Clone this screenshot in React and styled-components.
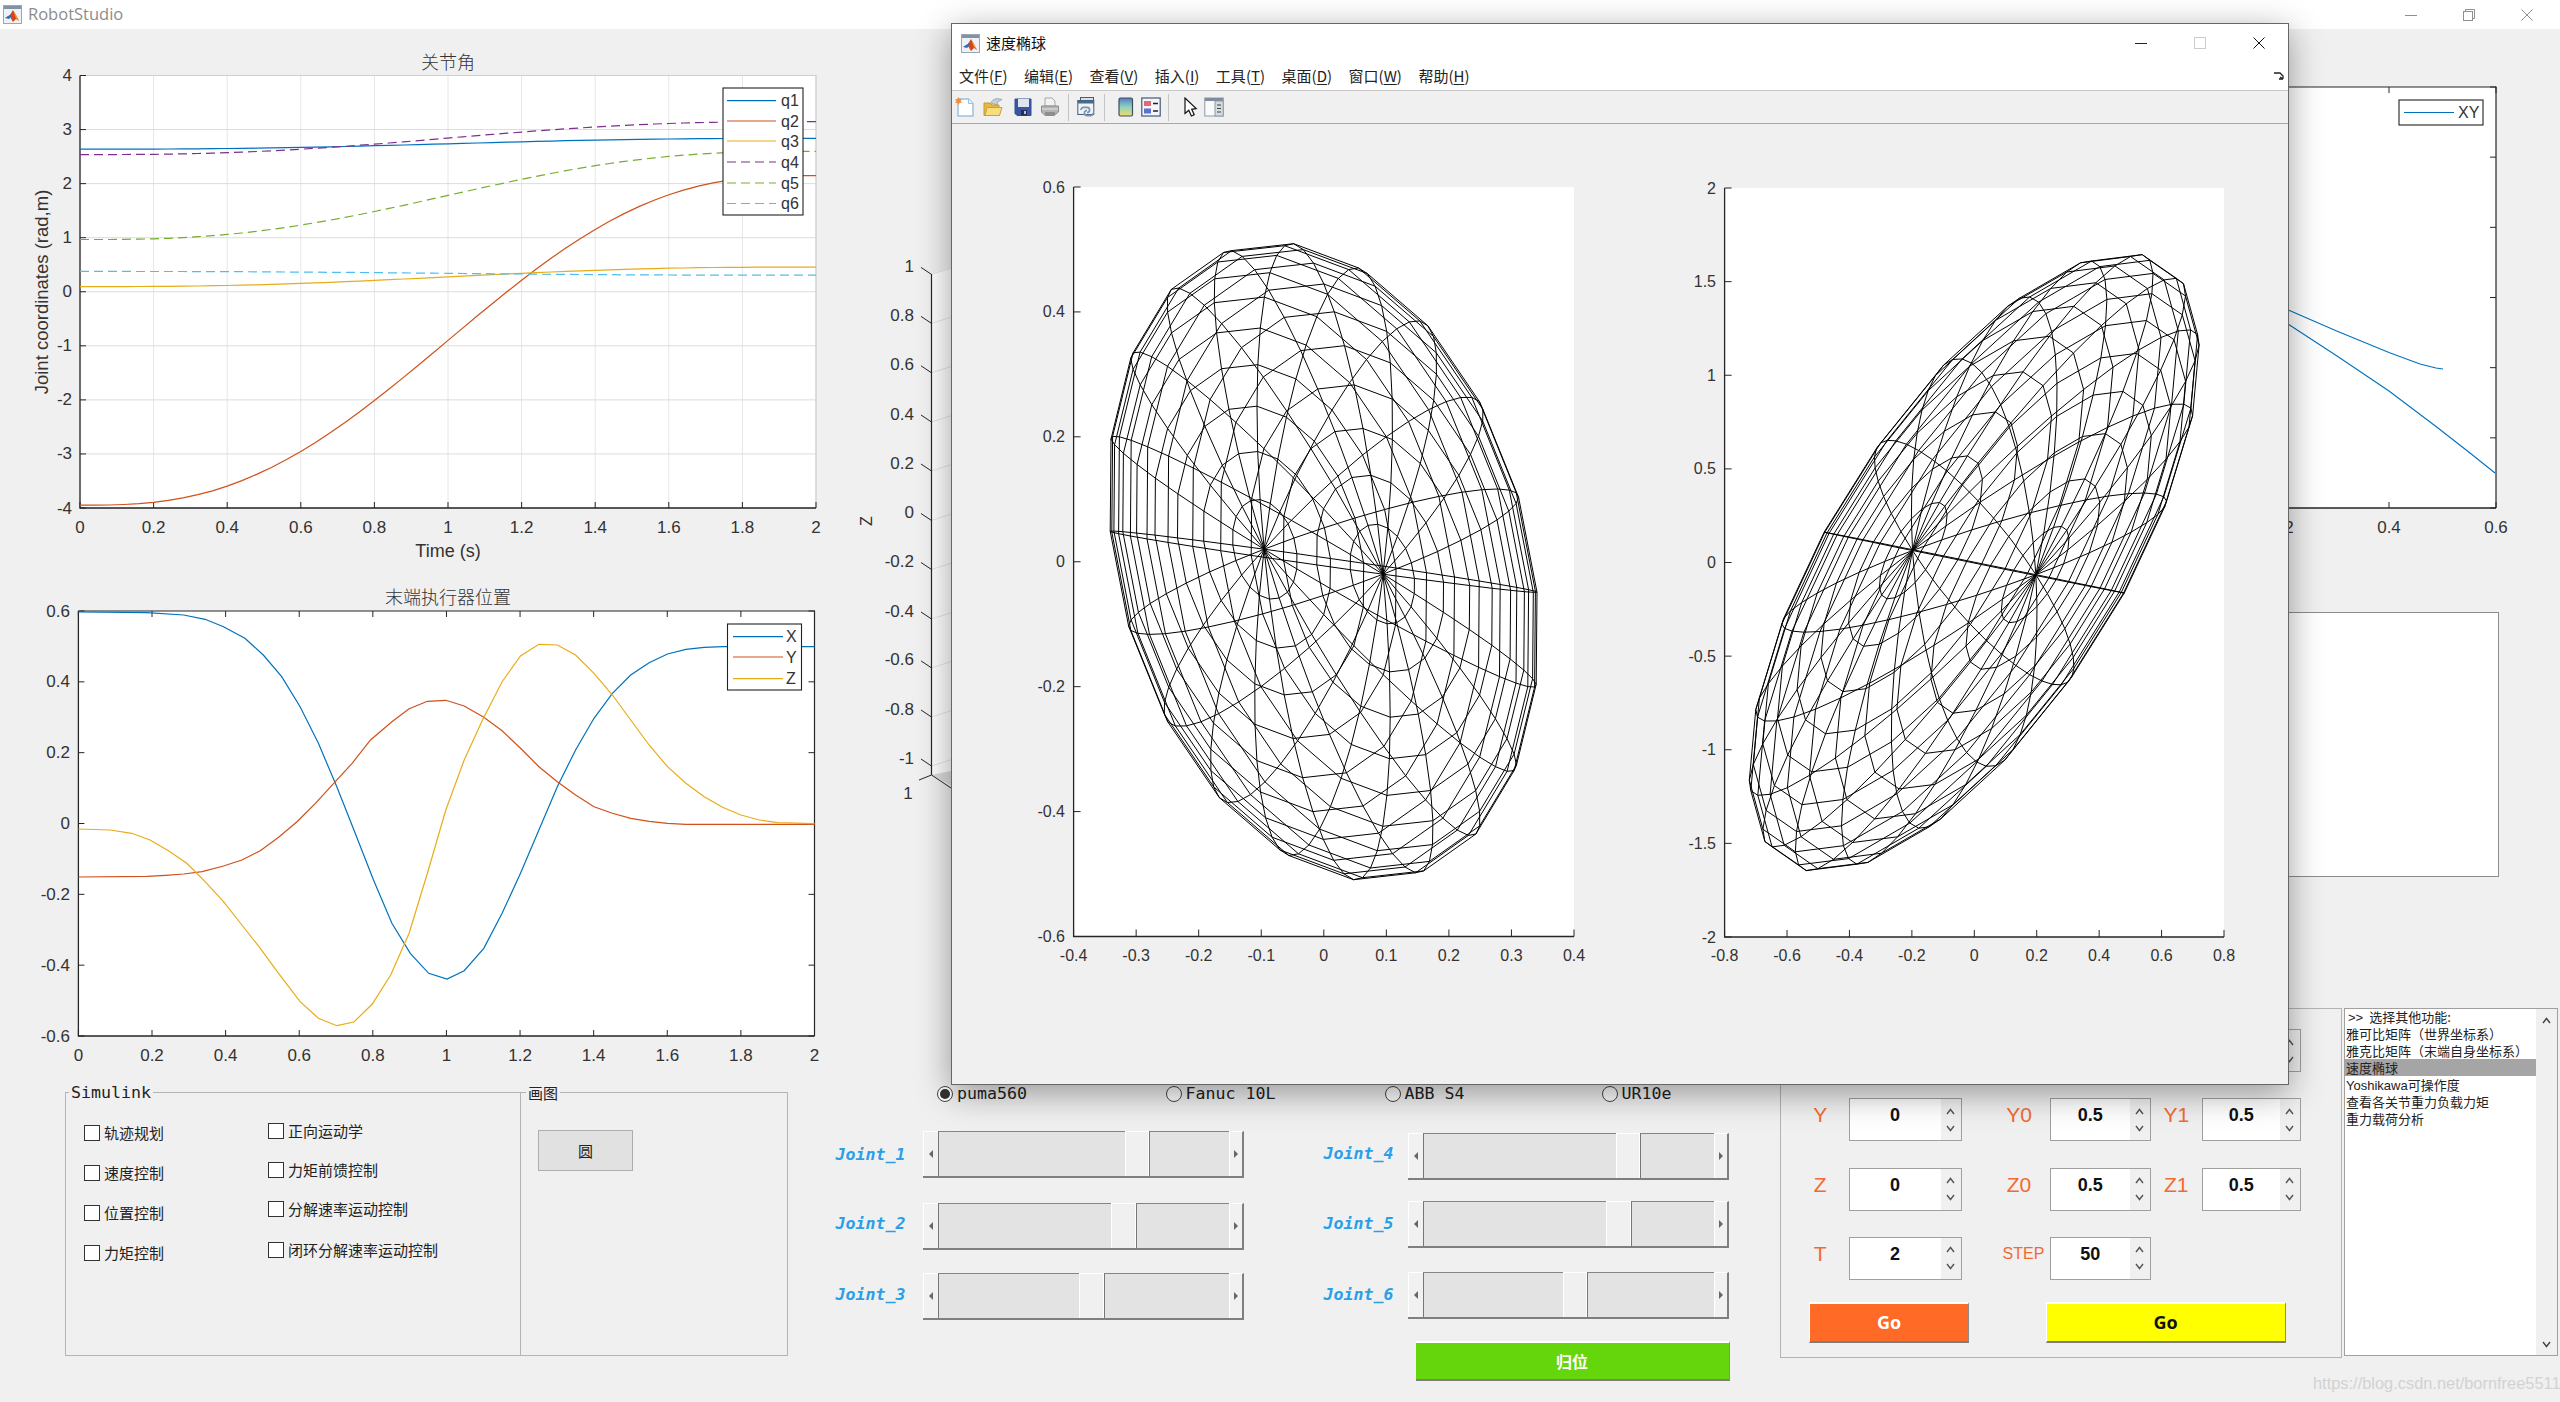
import React from "react";
import styled, { createGlobalStyle } from "styled-components";

const SANS = `"Liberation Sans", Arial, "Noto Sans CJK SC", sans-serif`;
const CJK = `"Noto Sans CJK SC", "Liberation Sans", sans-serif`;
const MONO = `"DejaVu Sans Mono", "Liberation Mono", "Noto Sans CJK SC", monospace`;

const Global = createGlobalStyle`
  html, body { margin: 0; padding: 0; background: #f0f0f0; }
  * { box-sizing: border-box; }
`;

const Page = styled.div`
  position: relative;
  width: 2560px;
  height: 1402px;
  overflow: hidden;
  background: #f0f0f0;
  color: #222;
  font-family: ${CJK};
`;
const AppBar = styled.header`
  display: flex;
  align-items: center;
  height: 29px;
  background: #fff;
  padding-left: 3px;
`;
const AppTitle = styled.span`
  margin: 0 0 2px 6px;
  font: 16.5px/20px "Open Sans", ${SANS};
  color: #8c8c8c;
  flex: 1;
`;
const Controls = styled.div`
  display: flex;
  height: 100%;
  align-items: center;
  margin-right: ${(p) => p.$right || 0}px;
`;
const CtlBtn = styled.span`
  display: flex;
  width: ${(p) => p.$w || 58}px;
  justify-content: center;
  align-items: center;
  color: ${(p) => p.$c || "#8f8f8f"};
`;
const Columns = styled.main`
  display: flex;
  align-items: flex-start;
`;
const LeftColumn = styled.section`
  width: 830px;
  display: flex;
  flex-direction: column;
`;
const CenterColumn = styled.section`
  width: 950px;
  display: flex;
  flex-direction: column;
`;
const RightColumn = styled.section`
  width: 780px;
  display: flex;
  flex-direction: column;
`;
const Chart = styled.svg`
  display: block;
  flex: none;
`;
const TickText = styled.text`
  font-family: ${SANS};
  font-size: ${(p) => p.$size || 17}px;
  fill: #333;
`;
const AxisTitle = styled.text`
  font-family: ${SANS};
  font-size: ${(p) => p.$size || 18}px;
  fill: #333;
`;
const PlotTitle = styled.text`
  font-family: ${CJK};
  font-size: 18px;
  font-weight: 300;
  fill: #333;
`;

/* bottom-left panels */
const PanelRow = styled.div`
  display: flex;
  margin: 26px 0 0 65px;
  height: 264px;
`;
const Panel = styled.div`
  position: relative;
  width: ${(p) => p.$w}px;
  height: 100%;
  border: 1px solid #b4b4b4;
  border-right-width: ${(p) => (p.$noRight ? 0 : 1)}px;
`;
const PanelTitle = styled.span`
  position: absolute;
  top: -11px;
  left: ${(p) => p.$left}px;
  padding: 0 2px;
  background: #f0f0f0;
  font: 16.6px/21px ${(p) => (p.$mono ? MONO : CJK)};
  font-size: ${(p) => (p.$mono ? 16.6 : 15)}px;
  color: #222;
`;
const CheckColumns = styled.div`
  display: flex;
  padding: ${(p) => p.$top}px 0 0 18px;
`;
const CheckColumn = styled.div`
  width: 184px;
  margin-top: ${(p) => p.$top}px;
  display: flex;
  flex-direction: column;
`;
const CheckRow = styled.label`
  display: flex;
  align-items: center;
  height: 20px;
  margin-bottom: ${(p) => p.$after}px;
  font: 15px/20px ${CJK};
  color: #222;
`;
const CheckBox = styled.span`
  width: 16px;
  height: 16px;
  margin-right: 4px;
  background: #fff;
  border: 1px solid #333;
  flex: none;
`;
const PlainButton = styled.div`
  display: flex;
  align-items: center;
  justify-content: center;
  width: 95px;
  height: 41px;
  margin: 37px 0 0 17px;
  background: #e1e1e1;
  border: 1px solid #adadad;
  font: 15px/20px ${CJK};
  color: #222;
`;

/* joints */
const RadioRow = styled.div`
  display: flex;
  align-items: center;
  height: 20px;
  margin: 18px 0 0 107px;
`;
const RadioItem = styled.label`
  display: flex;
  align-items: center;
  width: ${(p) => p.$w}px;
  font: 16.6px/20px ${MONO};
  color: #222;
`;
const RadioDot = styled.span`
  display: flex;
  align-items: center;
  justify-content: center;
  width: 16px;
  height: 16px;
  margin-right: 4px;
  border: 1px solid #444;
  border-radius: 50%;
  background: #fff;
  &::after {
    content: "";
    width: 10px;
    height: 10px;
    border-radius: 50%;
    background: ${(p) => (p.$on ? "#333" : "transparent")};
  }
`;
const JointGrid = styled.div`
  display: flex;
  margin-top: 17px;
`;
const JointColumn = styled.div`
  display: flex;
  flex-direction: column;
  width: ${(p) => p.$w}px;
  padding-left: ${(p) => p.$pad}px;
`;
const JointRow = styled.div`
  display: flex;
  align-items: center;
  margin-top: ${(p) => p.$top}px;
`;
const JointName = styled.span`
  width: ${(p) => p.$w}px;
  margin-bottom: ${(p) => p.$lift || 0}px;
  font: italic bold 16.6px/20px ${MONO};
  color: #2a9fe8;
  flex: none;
`;
const Slider = styled.div`
  display: flex;
  width: 321px;
  height: 47px;
  flex: none;
  border-bottom: 2px solid #7f7f7f;
`;
const SliderEnd = styled.div`
  display: flex;
  align-items: center;
  justify-content: center;
  width: 15px;
  background: #f1f1f1;
  border-left: 1px solid #fff;
  border-top: 1px solid #fff;
  border-right: ${(p) => (p.$right ? "2px solid #7f7f7f" : "0")};
  flex: none;
`;
const Track = styled.div`
  flex: ${(p) => (p.$w ? "none" : 1)};
  width: ${(p) => p.$w || 0}px;
  background: #e3e3e3;
  border-top: 1px solid #858585;
  border-left: 1px solid #777;
`;
const Thumb = styled.div`
  width: 24.5px;
  background: #f0f0f0;
  border-left: 1px solid #fff;
  border-top: 1px solid #fff;
  border-right: 1px solid #fff;
  flex: none;
`;
const HomeButton = styled.button`
  display: block;
  width: 314px;
  height: 40px;
  margin: 22px 0 0 92px;
  padding: 0;
  background: #66d60c;
  border: 0;
  border-top: 2px solid #fff;
  border-right: 1px solid #8a8a8a;
  border-bottom: 2px solid #7d7d7d;
  color: #fff;
  font: bold 16px/20px ${CJK};
`;

/* right column */
const WhiteBox = styled.div`
  width: 699px;
  height: 265px;
  margin: 12px 0 0 20px;
  background: #fff;
  border: 1px solid #8c8c8c;
`;
const LowerRight = styled.div`
  display: flex;
  margin-top: 131px;
`;
const CoordPanel = styled.div`
  display: flex;
  flex-direction: column;
  width: ${(p) => p.$w}px;
  height: 350px;
  padding-top: 20px;
  border: 1px solid #b4b4b4;
  border-left-width: ${(p) => (p.$first ? 1 : 0)}px;
  border-right-width: ${(p) => (p.$last ? 1 : 0)}px;
`;
const CoordRow = styled.div`
  display: grid;
  grid-template-columns: ${(p) => p.$cols};
  align-items: center;
  height: 43px;
  margin-bottom: 26.3px;
`;
const CoordName = styled.span`
  text-align: center;
  margin-bottom: 9px;
  padding: ${(p) => p.$pad || "0"};
  font: ${(p) => p.$size || 21}px/24px ${SANS};
  color: #f26a32;
`;
const Spin = styled.div`
  display: flex;
  height: 43px;
  background: #fff;
  border: 1px solid #a0a0a0;
`;
const SpinValue = styled.span`
  flex: 1;
  text-align: center;
  padding-top: 6px;
  font: bold 18px/20px ${SANS};
  color: #111;
`;
const SpinStrip = styled.span`
  display: flex;
  flex-direction: column;
  justify-content: center;
  align-items: center;
  gap: 10px;
  width: 20px;
  background: #f0f0f0;
  color: #555;
`;
const GoButton = styled.button`
  width: ${(p) => p.$w}px;
  height: 41px;
  margin: -4.6px 0 0 ${(p) => p.$left}px;
  padding: 0;
  background: ${(p) => p.$bg};
  color: ${(p) => p.$fg};
  border: 0;
  border-top: 2px solid #fff;
  border-left: 1px solid #fff;
  border-right: 1px solid #8a8a8a;
  border-bottom: 2px solid #7d7d7d;
  font: bold 18px/20px "Open Sans", ${SANS};
`;
const ListBox = styled.div`
  display: flex;
  width: 214px;
  height: 348px;
  margin-left: 2px;
  background: #fff;
  border: 1px solid #a0a0a0;
`;
const ListItems = styled.ul`
  flex: 1;
  margin: -1px 0 0;
  padding: 0;
  list-style: none;
`;
const ListItem = styled.li`
  height: 17px;
  padding-left: 1px;
  background: ${(p) => (p.$sel ? "#a5a5a5" : "transparent")};
  font: 13px/17px ${CJK};
  color: #222;
  white-space: nowrap;
`;
const Latin = styled.span`
  margin: 0 ${(p) => p.$after || 0}px 0 ${(p) => p.$before || 0}px;
  font: 13px/17px ${SANS};
`;
const ListScroll = styled.div`
  display: flex;
  flex-direction: column;
  justify-content: space-between;
  align-items: center;
  width: 21px;
  padding: 8px 0 7px;
  background: #f0f0f0;
  color: #444;
`;
const Watermark = styled.span`
  position: absolute;
  left: 2313px;
  top: 1374px;
  font: 16.4px/18px ${SANS};
  color: #d2d2d2;
`;

/* floating figure window */
const Window = styled.div`
  position: absolute;
  left: 951px;
  top: 23px;
  width: 1338px;
  height: 1062px;
  display: flex;
  flex-direction: column;
  background: #f0f0f0;
  border: 1px solid #666;
  box-shadow: 0 8px 32px rgba(0, 0, 0, 0.38);
`;
const WinTitleBar = styled.div`
  display: flex;
  align-items: center;
  height: 38px;
  padding-left: 9px;
  background: #fff;
`;
const WinTitle = styled.span`
  flex: 1;
  margin-left: 6px;
  font: 15px/20px ${CJK};
  color: #111;
`;
const MenuBar = styled.nav`
  position: relative;
  display: flex;
  align-items: center;
  gap: 16.5px;
  height: 29px;
  padding: 0 0 0 7px;
  background: #fff;
  border-bottom: 1px solid #c8c8c8;
`;
const MenuItem = styled.span`
  font: 15px/18px ${CJK};
  color: #222;
  u { text-underline-offset: 2px; }
`;
const CornerArrow = styled.span`
  position: absolute;
  right: 4px;
  top: 10px;
  display: flex;
`;
const ToolBar = styled.div`
  display: flex;
  align-items: center;
  height: 33px;
  padding-left: 3px;
  border-bottom: 1px solid #a8a8a8;
`;
const ToolIcon = styled.svg`
  width: 20px;
  height: 20px;
  margin-left: ${(p) => p.$left || 0}px;
  flex: none;
`;
const ToolSep = styled.span`
  width: 1px;
  height: 27px;
  margin: 0 ${(p) => p.$r}px 0 ${(p) => p.$l}px;
  background: #c4c4c4;
`;
const WinContent = styled.div`
  display: flex;
  flex: 1;
`;

/* ---------- chart helpers ---------- */
const pathOf = (pts) =>
  pts.map((p, i) => `${i ? "L" : "M"}${p[0].toFixed(1)} ${p[1].toFixed(1)}`).join("");

function Axes({ x0, x1, y0, y1, xTicks, yTicks, grid, boxColor, mirror, size = 17, tick = 6, xLabelY, yLabelX, sideColor = "#262626" }) {
  const xs = xTicks.map((_, i) => x0 + ((x1 - x0) * i) / (xTicks.length - 1));
  const ys = yTicks.map((_, i) => y0 + ((y1 - y0) * i) / (yTicks.length - 1));
  return (
    <g>
      <rect x={x0} y={y0} width={x1 - x0} height={y1 - y0} fill="#fff" />
      {grid && xs.map((x, i) => <line key={i} x1={x} x2={x} y1={y0} y2={y1} stroke="#e6e6e6" />)}
      {grid && ys.map((y, i) => <line key={i} x1={x0} x2={x1} y1={y} y2={y} stroke="#dcdcdc" />)}
      {boxColor && <path d={`M${x0} ${y0}H${x1}V${y1}`} fill="none" stroke={boxColor} strokeWidth="1.2" />}
      <path d={`M${x0} ${y0}V${y1}H${x1}`} fill="none" stroke={sideColor} strokeWidth="1.3" />
      {xs.map((x, i) => (
        <g key={i}>
          <line x1={x} x2={x} y1={y1} y2={y1 - tick} stroke={sideColor} />
          {mirror && <line x1={x} x2={x} y1={y0} y2={y0 + tick} stroke={sideColor} />}
          <TickText x={x} y={xLabelY} textAnchor="middle" dominantBaseline="central" $size={size}>{xTicks[i]}</TickText>
        </g>
      ))}
      {ys.map((y, i) => (
        <g key={i}>
          <line x1={x0} x2={x0 + tick} y1={y} y2={y} stroke={sideColor} />
          {mirror && <line x1={x1} x2={x1 - tick} y1={y} y2={y} stroke={sideColor} />}
          <TickText x={yLabelX} y={y} textAnchor="end" dominantBaseline="central" $size={size}>{yTicks[i]}</TickText>
        </g>
      ))}
    </g>
  );
}

function Legend({ x, y, w, h, items, lineX1, lineX2, textX }) {
  return (
    <g>
      <rect x={x} y={y} width={w} height={h} fill="#fff" stroke="#222" strokeWidth="1.1" />
      {items.map((it) => (
        <g key={it.label}>
          <line x1={lineX1} x2={lineX2} y1={it.y} y2={it.y} stroke={it.color} strokeDasharray={it.dash ? "9 5" : undefined} strokeWidth="1.2" />
          <TickText x={textX} y={it.y} dominantBaseline="central" $size={16}>{it.label}</TickText>
        </g>
      ))}
    </g>
  );
}

const C = { blue: "#0072BD", red: "#D0501A", yellow: "#E8AC18", purple: "#7E2F8E", green: "#77AC30", cyan: "#4DBEEE" };

const smooth = (a, b) => {
  const pts = [];
  for (let i = 0; i <= 50; i++) {
    const t = i / 50;
    const s = 10 * t ** 3 - 15 * t ** 4 + 6 * t ** 5;
    pts.push([80 + 736 * t, 292 - 54.1 * (a + (b - a) * s)]);
  }
  return pathOf(pts);
};
const JOINT_CURVES = [
  { a: 2.64, b: 2.84, color: C.blue, label: "q1", y: 100.6 },
  { a: -3.94, b: 2.15, color: C.red, label: "q2", y: 121 },
  { a: 0.1, b: 0.46, color: C.yellow, label: "q3", y: 141 },
  { a: 2.54, b: 3.15, color: C.purple, label: "q4", y: 162, dash: true },
  { a: 0.97, b: 2.6, color: C.green, label: "q5", y: 183, dash: true },
  { a: 0.38, b: 0.31, color: C.cyan, label: "q6", y: 203.5, dash: true },
];
const range = ["0", "0.2", "0.4", "0.6", "0.8", "1", "1.2", "1.4", "1.6", "1.8", "2"];

function JointChart() {
  return (
    <Chart width="830" height="539" viewBox="0 29 830 539">
      <PlotTitle x="448" y="60.5" textAnchor="middle" dominantBaseline="central">关节角</PlotTitle>
      <Axes x0={80} x1={816} y0={75.5} y1={508} xTicks={range} yTicks={["4", "3", "2", "1", "0", "-1", "-2", "-3", "-4"]} grid boxColor="#cfcfcf" xLabelY={527} yLabelX={72} />
      {JOINT_CURVES.map((c) => (
        <path key={c.label} d={smooth(c.a, c.b)} fill="none" stroke={c.color} strokeWidth="1.2" strokeDasharray={c.dash ? "9 5" : undefined} />
      ))}
      <Legend x={723} y={88} w={80} h={127} items={JOINT_CURVES} lineX1={727} lineX2={776} textX={781} />
      <AxisTitle x="41" y="292" textAnchor="middle" dominantBaseline="central" transform="rotate(-90 41 292)" $size={18.5}>Joint coordinates (rad,m)</AxisTitle>
      <AxisTitle x="448" y="551" textAnchor="middle" dominantBaseline="central">Time (s)</AxisTitle>
    </Chart>
  );
}

const zoomPts = (arr) => pathOf(arr.map(([x, y]) => [x / 1.633, 580 + y / 3]));
const POS = {
  X: [[128,96],[240,98],[300,105],[335,118],[365,140],[400,175],[430,225],[460,290],[490,380],[520,490],[550,620],[580,760],[610,900],[640,1030],[670,1120],[700,1180],[730,1197],[758,1172],[790,1105],[820,1000],[850,880],[880,750],[910,620],[940,510],[970,415],[1000,340],[1030,285],[1060,248],[1090,222],[1120,208],[1150,202],[1180,200],[1330,200]],
  Y: [[128,891],[240,889],[270,886],[300,882],[330,875],[365,858],[395,840],[425,812],[455,772],[485,725],[515,670],[545,610],[575,550],[605,480],[640,425],[668,386],[698,364],[728,361],[758,378],[790,412],[820,452],[850,505],[880,560],[910,605],[940,645],[970,680],[1000,700],[1030,715],[1060,724],[1090,730],[1120,733],[1330,733]],
  Z: [[128,747],[180,750],[215,760],[245,780],[275,812],[305,850],[335,905],[365,965],[395,1035],[425,1105],[455,1180],[490,1265],[520,1315],[550,1337],[578,1326],[608,1272],[638,1185],[668,1060],[698,880],[728,690],[758,540],[788,420],[820,305],[850,228],[880,193],[910,195],[940,225],[970,280],[1000,345],[1030,420],[1060,495],[1090,560],[1120,610],[1150,650],[1180,682],[1210,705],[1240,720],[1270,728],[1330,731]],
};

function PositionChart() {
  return (
    <Chart width="830" height="498" viewBox="0 568 830 498">
      <PlotTitle x="448" y="596" textAnchor="middle" dominantBaseline="central">末端执行器位置</PlotTitle>
      <Axes x0={78.4} x1={814.5} y0={611} y1={1036} xTicks={range} yTicks={["0.6", "0.4", "0.2", "0", "-0.2", "-0.4", "-0.6"]} boxColor="#262626" mirror xLabelY={1055} yLabelX={70} />
      <path d={zoomPts(POS.X)} fill="none" stroke={C.blue} strokeWidth="1.2" />
      <path d={zoomPts(POS.Y)} fill="none" stroke={C.red} strokeWidth="1.2" />
      <path d={zoomPts(POS.Z)} fill="none" stroke={C.yellow} strokeWidth="1.2" />
      <Legend x={727.5} y={624} w={74} h={66} lineX1={733} lineX2={783} textX={786}
        items={[{ label: "X", color: C.blue, y: 636.7 }, { label: "Y", color: C.red, y: 657 }, { label: "Z", color: C.yellow, y: 678.7 }]} />
    </Chart>
  );
}

function Axes3D() {
  const ticks = [274.4, 323.4, 372.8, 422, 471, 520.5, 569.5, 619, 667.9, 717, 766];
  const labels = ["1", "0.8", "0.6", "0.4", "0.2", "0", "-0.2", "-0.4", "-0.6", "-0.8", "-1"];
  return (
    <Chart width="950" height="1037" viewBox="830 29 950 1037">
      <polygon points="931.5,274 1100,220 1780,220 1780,700 1100,740 931.5,775" fill="#fff" />
      <polygon points="931.5,775 960,790 1200,790 1100,740" fill="#dcdcdc" />
      {ticks.map((y, i) => (
        <g key={y}>
          <line x1="931.5" x2="1100" y1={y} y2={y - 54} stroke="#e6e6e6" />
          <line x1="921" x2="931.5" y1={y - 7} y2={y} stroke="#262626" />
          <TickText x="914" y={y - 8} textAnchor="end" dominantBaseline="central">{labels[i]}</TickText>
        </g>
      ))}
      <line x1="931.5" x2="931.5" y1="274" y2="775" stroke="#262626" strokeWidth="1.2" />
      <line x1="931.5" x2="919" y1="775" y2="780" stroke="#262626" />
      <line x1="931.5" x2="960" y1="775" y2="794" stroke="#262626" />
      <TickText x="908" y="793" textAnchor="middle" dominantBaseline="central">1</TickText>
      <AxisTitle x="866" y="521" textAnchor="middle" dominantBaseline="central" transform="rotate(-90 866 521)" $size={16}>Z</AxisTitle>
    </Chart>
  );
}

function XYChart() {
  return (
    <Chart width="780" height="571" viewBox="1780 29 780 571">
      <Axes x0={1961} x1={2496} y0={87} y1={508} xTicks={["-0.4", "-0.2", "0", "0.2", "0.4", "0.6"]} yTicks={["", "", "", "", "", "", ""]} boxColor="#262626" mirror xLabelY={527} yLabelX={1950} />
      <path d={pathOf([[2200,272],[2288.3,310],[2336.7,331],[2389,352.5],[2420,364],[2436,368],[2443,369]])} fill="none" stroke={C.blue} strokeWidth="1.1" />
      <path d={pathOf([[2200,270],[2288,324],[2337,356],[2389,391],[2436.7,427],[2470,453],[2495,473]])} fill="none" stroke={C.blue} strokeWidth="1.1" />
      <Legend x={2399} y={100} w={84} h={25} lineX1={2404} lineX2={2454} textX={2458} items={[{ label: "XY", color: C.blue, y: 112.5 }]} />
    </Chart>
  );
}

function wire(cx, cy, c1, c2, c3) {
  const P = (i, j) => {
    const ph = (i * Math.PI) / 20;
    const th = (j * 2 * Math.PI) / 20;
    const a = Math.sin(ph) * Math.cos(th);
    const b = Math.sin(ph) * Math.sin(th);
    const c = Math.cos(ph);
    return [cx + a * c1[0] + b * c2[0] + c * c3[0], cy - (a * c1[1] + b * c2[1] + c * c3[1])];
  };
  let d = "";
  for (let i = 1; i < 20; i++) {
    const r = [];
    for (let j = 0; j <= 20; j++) r.push(P(i, j));
    d += pathOf(r);
  }
  for (let j = 0; j < 20; j++) {
    const r = [];
    for (let i = 0; i <= 20; i++) r.push(P(i, j));
    d += pathOf(r);
  }
  return d;
}

function Ellipsoid({ w, x, mesh, axes }) {
  return (
    <Chart width={w} height="960" viewBox={`${x} 124 ${w} 960`}>
      <Axes {...axes} size={16} tick={7} />
      <path d={mesh} fill="none" stroke="#000" strokeWidth="1" />
    </Chart>
  );
}

/* ---------- small drawings ---------- */
function MatlabIcon({ size = 19 }) {
  return (
    <svg width={size} height={size} viewBox="0 0 19 19">
      <rect x="0.5" y="0.5" width="18" height="18" fill="#eef2f6" stroke="#9aa6b2" />
      <rect x="1" y="1" width="17" height="3" fill="#7e93a8" />
      <path d="M2 13 L7 10 L10 5 L13 10 L16 16 L13 14 L10 17 L7 12 Z" fill="#d8451b" />
      <path d="M2 13 L7 10 L8.5 8 L8 12 L6 14 Z" fill="#2d6fb5" />
      <path d="M10 5 L13 10 L16 16 L13 13 Z" fill="#f1a32b" />
    </svg>
  );
}
const Up = () => (
  <svg width="9" height="7" viewBox="0 0 9 7"><path d="M1 6 L4.5 1.5 L8 6" fill="none" stroke="currentColor" strokeWidth="1.4" /></svg>
);
const Down = () => (
  <svg width="9" height="7" viewBox="0 0 9 7"><path d="M1 1 L4.5 5.5 L8 1" fill="none" stroke="currentColor" strokeWidth="1.4" /></svg>
);
const TriL = () => (<svg width="4" height="8" viewBox="0 0 4 8"><path d="M4 0 L0 4 L4 8 Z" fill="#666" /></svg>);
const TriR = () => (<svg width="4" height="8" viewBox="0 0 4 8"><path d="M0 0 L4 4 L0 8 Z" fill="#666" /></svg>);
const MinGlyph = () => (<svg width="12" height="12" viewBox="0 0 12 12"><path d="M0 6.5H12" stroke="currentColor" /></svg>);
const MaxGlyph = () => (<svg width="12" height="12" viewBox="0 0 12 12"><rect x="0.5" y="0.5" width="11" height="11" fill="none" stroke="currentColor" /></svg>);
const RestoreGlyph = () => (
  <svg width="12" height="12" viewBox="0 0 12 12"><rect x="0.5" y="2.5" width="9" height="9" fill="none" stroke="currentColor" /><path d="M2.5 2.5V0.5H11.5V9.5H9.5" fill="none" stroke="currentColor" /></svg>
);
const CloseGlyph = () => (<svg width="12" height="12" viewBox="0 0 12 12"><path d="M0.5 0.5L11.5 11.5M11.5 0.5L0.5 11.5" stroke="currentColor" /></svg>);

function Toolbar() {
  return (
    <ToolBar>
      <ToolIcon viewBox="0 0 20 20">
        <path d="M3 2H13.5L18 6.5V19H3Z" fill="#fff" stroke="#9cc0de" strokeWidth="1.5" />
        <path d="M13.5 2V6.5H18" fill="#e8f0f8" stroke="#9cc0de" />
        <path d="M3.5 0L4.6 2.3L7 2L5.6 4L7 6L4.6 5.7L3.5 8L2.4 5.7L0 6L1.4 4L0 2L2.4 2.3Z" fill="#ef8d3a" />
      </ToolIcon>
      <ToolIcon $left={8} viewBox="0 0 20 20">
        <path d="M8 6C9 2 14 0.5 19 2.5L15 4.5L14 8Z" fill="#c6ced8" stroke="#8b9aa8" strokeWidth=".7" />
        <path d="M1 6H7L9 8H16V18.5H1Z" fill="#e8b93a" stroke="#c09a3a" />
        <path d="M2 18.5L4 10.5H19L16.5 18.5Z" fill="#f8dd80" stroke="#c8a040" />
      </ToolIcon>
      <ToolIcon $left={10} viewBox="0 0 20 20">
        <path d="M2 2H18V18.5H4L2 16.5Z" fill="#3a55a8" stroke="#33508f" />
        <rect x="5" y="2" width="11" height="8" fill="#dfe4ee" />
        <rect x="8" y="13" width="6" height="5.5" fill="#262e4e" />
        <rect x="11" y="14" width="2" height="3" fill="#b8c2dc" />
      </ToolIcon>
      <ToolIcon $left={7} viewBox="0 0 20 20">
        <path d="M5 1H12L15 4V9H5Z" fill="#f2f2f2" stroke="#a8a8a8" />
        <path d="M1.5 9H18.5V15L14 18.5H5L1.5 15Z" fill="#b4b4b4" stroke="#8c8c8c" />
        <path d="M2 12H18" stroke="#e4e4e4" />
        <path d="M5 15H15V18H5Z" fill="#8e8e8e" />
      </ToolIcon>
      <ToolSep $l={8} $r={8} />
      <ToolIcon viewBox="0 0 20 20">
        <rect x="3.5" y="0.5" width="13" height="8" fill="#d7e0ea" stroke="#3f5f80" />
        <rect x="0.8" y="3.5" width="16" height="14" fill="#eef3f8" stroke="#3f5f80" />
        <rect x="0.8" y="3.5" width="16" height="3" fill="#4a6a8c" />
        <path d="M4 13a2.6 2.6 0 0 1 2.6-2.6H10a2.6 2.6 0 0 1 0 5.2M16 16a2.6 2.6 0 0 1-2.6 2.6H10a2.6 2.6 0 0 1 0-5.2" fill="none" stroke="#7d94aa" strokeWidth="1.7" />
      </ToolIcon>
      <ToolSep $l={7} $r={11} />
      <ToolIcon viewBox="0 0 20 20">
        <defs>
          <linearGradient id="cbar" x1="0" x2="0" y1="0" y2="1">
            <stop offset="0" stopColor="#5a78c8" />
            <stop offset=".5" stopColor="#8fd4bc" />
            <stop offset="1" stopColor="#f2d870" />
          </linearGradient>
        </defs>
        <rect x="3" y="1" width="13.5" height="18" rx="1.5" fill="url(#cbar)" stroke="#3d4f62" strokeWidth="1.2" />
      </ToolIcon>
      <ToolIcon $left={5} viewBox="0 0 20 20">
        <rect x="0.8" y="1" width="18.4" height="18" fill="#f5f6fa" stroke="#3f5a78" strokeWidth="1.2" />
        <rect x="3" y="4" width="7" height="5" fill="#e26a70" />
        <rect x="3" y="11.5" width="7" height="5" fill="#5a70d8" />
        <path d="M12 6.5H17M12 14H17" stroke="#222" strokeWidth="1.5" />
      </ToolIcon>
      <ToolSep $l={7} $r={13} />
      <ToolIcon viewBox="0 0 20 20">
        <path d="M3 1V16.5L6.8 13.2L9.4 19L12.2 17.8L9.7 12.3L14.2 11.6Z" fill="#fff" stroke="#111" strokeWidth="1.2" />
      </ToolIcon>
      <ToolIcon $left={2} viewBox="0 0 20 20">
        <rect x="0.8" y="1" width="18.4" height="18" fill="#fafafa" stroke="#8e9aa8" />
        <rect x="0.8" y="1" width="18.4" height="3" fill="#7e8c9c" />
        <rect x="11" y="4" width="8.2" height="15" fill="#d6dbe0" stroke="#8e9aa8" />
        <path d="M13 8H17M13 11.5H17M13 15H17" stroke="#444" strokeWidth="1.2" />
      </ToolIcon>
    </ToolBar>
  );
}

function JointSlider({ name, left, labelW, lift, top }) {
  return (
    <JointRow $top={top}>
      <JointName $w={labelW} $lift={lift}>{name}</JointName>
      <Slider>
        <SliderEnd><TriL /></SliderEnd>
        <Track $w={left} />
        <Thumb />
        <Track />
        <SliderEnd $right><TriR /></SliderEnd>
      </Slider>
    </JointRow>
  );
}

function SpinBox({ value }) {
  return (
    <Spin>
      <SpinValue>{value}</SpinValue>
      <SpinStrip><Up /><Down /></SpinStrip>
    </Spin>
  );
}

const COLS1 = "67.5px 113px";
const COLS2 = "53px 100.5px 51.5px 98.5px";
const PAD1 = "0 0 0 11px";
const PAD0 = "0 9px 0 0";

const MENUS = [["文件", "F"], ["编辑", "E"], ["查看", "V"], ["插入", "I"], ["工具", "T"], ["桌面", "D"], ["窗口", "W"], ["帮助", "H"]];

export default function App() {
  const meshL = wire(1323.6, 561.7, [205, -28], [-30, 318], [59.5, -12.5]);
  const meshR = wire(1974.2, 562.6, [137, -28], [168, 308], [61.7, -12.1]);
  return (
    <Page>
      <Global />
      <AppBar>
        <MatlabIcon />
        <AppTitle>RobotStudio</AppTitle>
        <Controls $right={4}>
          <CtlBtn><MinGlyph /></CtlBtn>
          <CtlBtn><RestoreGlyph /></CtlBtn>
          <CtlBtn><CloseGlyph /></CtlBtn>
        </Controls>
      </AppBar>
      <Columns>
        <LeftColumn>
          <JointChart />
          <PositionChart />
          <PanelRow>
            <Panel $w={455} $noRight>
              <PanelTitle $mono $left={3}>Simulink</PanelTitle>
              <CheckColumns $top={29.5}>
                <CheckColumn $top={0}>
                  <CheckRow $after={20}><CheckBox />轨迹规划</CheckRow>
                  <CheckRow $after={20}><CheckBox />速度控制</CheckRow>
                  <CheckRow $after={20}><CheckBox />位置控制</CheckRow>
                  <CheckRow $after={0}><CheckBox />力矩控制</CheckRow>
                </CheckColumn>
                <CheckColumn $top={-2}>
                  <CheckRow $after={19}><CheckBox />正向运动学</CheckRow>
                  <CheckRow $after={19}><CheckBox />力矩前馈控制</CheckRow>
                  <CheckRow $after={21}><CheckBox />分解速率运动控制</CheckRow>
                  <CheckRow $after={0}><CheckBox />闭环分解速率运动控制</CheckRow>
                </CheckColumn>
              </CheckColumns>
            </Panel>
            <Panel $w={268}>
              <PanelTitle $left={5}>画图</PanelTitle>
              <PlainButton>圆</PlainButton>
            </Panel>
          </PanelRow>
        </LeftColumn>

        <CenterColumn>
          <Axes3D />
          <RadioRow>
            <RadioItem $w={228.5}><RadioDot $on />puma560</RadioItem>
            <RadioItem $w={219}><RadioDot />Fanuc 10L</RadioItem>
            <RadioItem $w={217}><RadioDot />ABB S4</RadioItem>
            <RadioItem $w={120}><RadioDot />UR10e</RadioItem>
          </RadioRow>
          <JointGrid>
            <JointColumn $w={493.6} $pad={5.5}>
              <JointSlider name="Joint_1" labelW={87} left={187} top={10} lift={0} />
              <JointSlider name="Joint_2" labelW={87} left={173.5} top={25} lift={5} />
              <JointSlider name="Joint_3" labelW={87} left={141.5} top={23} lift={4} />
            </JointColumn>
            <JointColumn $w={450} $pad={0}>
              <JointSlider name="Joint_4" labelW={84.4} left={193} top={12} lift={5} />
              <JointSlider name="Joint_5" labelW={84.4} left={183.5} top={21} lift={1} />
              <JointSlider name="Joint_6" labelW={84.4} left={140} top={24} lift={2} />
              <HomeButton>归位</HomeButton>
            </JointColumn>
          </JointGrid>
        </CenterColumn>

        <RightColumn>
          <XYChart />
          <WhiteBox />
          <LowerRight>
            <CoordPanel $w={217} $first>
              <CoordRow $cols={COLS1}><CoordName $pad={PAD1}>X</CoordName><SpinBox value="0.6" /></CoordRow>
              <CoordRow $cols={COLS1}><CoordName $pad={PAD1}>Y</CoordName><SpinBox value="0" /></CoordRow>
              <CoordRow $cols={COLS1}><CoordName $pad={PAD1}>Z</CoordName><SpinBox value="0" /></CoordRow>
              <CoordRow $cols={COLS1}><CoordName $pad={PAD1}>T</CoordName><SpinBox value="2" /></CoordRow>
              <GoButton $w={160} $left={28} $bg="#ff6a26" $fg="#fff">Go</GoButton>
            </CoordPanel>
            <CoordPanel $w={345} $last>
              <CoordRow $cols={COLS2}><CoordName $pad={PAD0}>X0</CoordName><SpinBox value="0.5" /><CoordName>X1</CoordName><SpinBox value="0.5" /></CoordRow>
              <CoordRow $cols={COLS2}><CoordName $pad={PAD0}>Y0</CoordName><SpinBox value="0.5" /><CoordName>Y1</CoordName><SpinBox value="0.5" /></CoordRow>
              <CoordRow $cols={COLS2}><CoordName $pad={PAD0}>Z0</CoordName><SpinBox value="0.5" /><CoordName>Z1</CoordName><SpinBox value="0.5" /></CoordRow>
              <CoordRow $cols={COLS2}><CoordName $size={16}>STEP</CoordName><SpinBox value="50" /></CoordRow>
              <GoButton $w={240} $left={48.5} $bg="#ffff00" $fg="#111">Go</GoButton>
            </CoordPanel>
            <ListBox>
              <ListItems>
                <ListItem><Latin $before={2} $after={6}>&gt;&gt;</Latin>选择其他功能:</ListItem>
                <ListItem>雅可比矩阵（世界坐标系）</ListItem>
                <ListItem>雅克比矩阵（末端自身坐标系）</ListItem>
                <ListItem $sel>速度椭球</ListItem>
                <ListItem><Latin>Yoshikawa</Latin>可操作度</ListItem>
                <ListItem>查看各关节重力负载力矩</ListItem>
                <ListItem>重力载荷分析</ListItem>
              </ListItems>
              <ListScroll><Up /><Down /></ListScroll>
            </ListBox>
          </LowerRight>
        </RightColumn>
      </Columns>

      <Watermark>https://blog.csdn.net/bornfree5511</Watermark>

      <Window>
        <WinTitleBar>
          <MatlabIcon />
          <WinTitle>速度椭球</WinTitle>
          <Controls>
            <CtlBtn $w={59} $c="#222"><MinGlyph /></CtlBtn>
            <CtlBtn $w={59} $c="#ccc"><MaxGlyph /></CtlBtn>
            <CtlBtn $w={59} $c="#111"><CloseGlyph /></CtlBtn>
          </Controls>
        </WinTitleBar>
        <MenuBar>
          {MENUS.map(([t, k]) => <MenuItem key={k}>{t}(<u>{k}</u>)</MenuItem>)}
          <CornerArrow>
            <svg width="10" height="8" viewBox="0 0 10 8"><path d="M0 1 H6 L9 4 V7 M9 7 L6 5 M9 7 H5" fill="none" stroke="#222" strokeWidth="1.3" /></svg>
          </CornerArrow>
        </MenuBar>
        <Toolbar />
        <WinContent>
          <Ellipsoid w={698} x={952} mesh={meshL}
            axes={{ x0: 1073.6, x1: 1574, y0: 187, y1: 936.5, xLabelY: 955, yLabelX: 1065,
              xTicks: ["-0.4", "-0.3", "-0.2", "-0.1", "0", "0.1", "0.2", "0.3", "0.4"],
              yTicks: ["0.6", "0.4", "0.2", "0", "-0.2", "-0.4", "-0.6"] }} />
          <Ellipsoid w={638} x={1650} mesh={meshR}
            axes={{ x0: 1724.6, x1: 2224, y0: 188, y1: 937, xLabelY: 955, yLabelX: 1716,
              xTicks: ["-0.8", "-0.6", "-0.4", "-0.2", "0", "0.2", "0.4", "0.6", "0.8"],
              yTicks: ["2", "1.5", "1", "0.5", "0", "-0.5", "-1", "-1.5", "-2"] }} />
        </WinContent>
      </Window>
    </Page>
  );
}
